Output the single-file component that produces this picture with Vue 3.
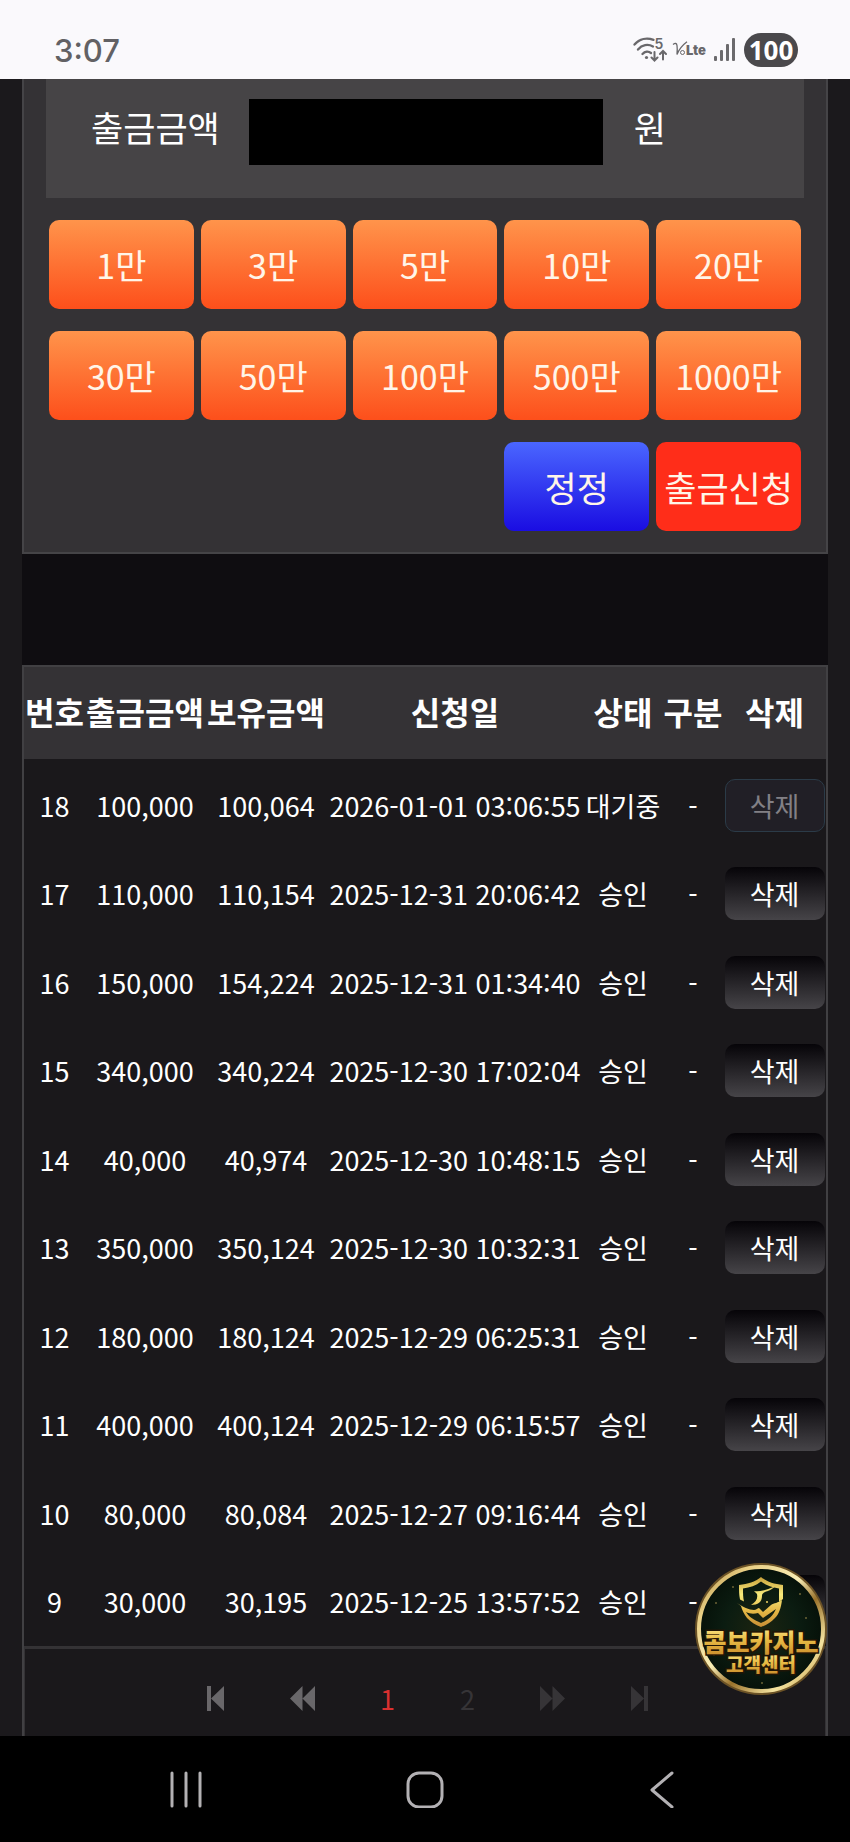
<script setup>
import { ref } from 'vue'

const amount = ref('')
const presets = [1, 3, 5, 10, 20, 30, 50, 100, 500, 1000]
const headings = ['번호', '출금금액', '보유금액', '신청일', '상태', '구분', '삭제']
const rows = [
  { no: 18, amount: '100,000', balance: '100,064', date: '2026-01-01 03:06:55', status: '대기중', pending: true },
  { no: 17, amount: '110,000', balance: '110,154', date: '2025-12-31 20:06:42', status: '승인' },
  { no: 16, amount: '150,000', balance: '154,224', date: '2025-12-31 01:34:40', status: '승인' },
  { no: 15, amount: '340,000', balance: '340,224', date: '2025-12-30 17:02:04', status: '승인' },
  { no: 14, amount: '40,000', balance: '40,974', date: '2025-12-30 10:48:15', status: '승인' },
  { no: 13, amount: '350,000', balance: '350,124', date: '2025-12-30 10:32:31', status: '승인' },
  { no: 12, amount: '180,000', balance: '180,124', date: '2025-12-29 06:25:31', status: '승인' },
  { no: 11, amount: '400,000', balance: '400,124', date: '2025-12-29 06:15:57', status: '승인' },
  { no: 10, amount: '80,000', balance: '80,084', date: '2025-12-27 09:16:44', status: '승인' },
  { no: 9, amount: '30,000', balance: '30,195', date: '2025-12-25 13:57:52', status: '승인' }
]
</script>

<template>
  <div class="screen" lang="ko">
    <header class="status-bar">
      <time class="clock">3:07</time>
      <div class="indicators">
        <svg class="wifi" viewBox="0 0 34 26" fill="none" stroke="#69686b" stroke-width="2.3" stroke-linecap="round">
          <path d="M1.500 7.500C6.500 1.500 14 .5 20.500 2.800M5 12.500c4-4.800 10-5.800 15-3M9.500 17c2.500-2.800 6-3 8.500-1" />
          <circle cx="13.500" cy="20.500" r="1.600" fill="#69686b" stroke="none" />
          <path d="M21.500 15v8M18.500 20.500l3 3 3-3M30 22.500v-8M27 17l3-3 3 3" stroke-width="2" />
          <text x="21.500" y="12" class="wifi-band">5</text>
        </svg>
        <svg class="volte" viewBox="0 0 34 18">
          <path d="M1 3.500q3.500-2.500 4 1t0 9Q8 6 15 .8" fill="none" stroke="#69686b" stroke-width="1.300" />
          <circle cx="10.500" cy="11.500" r="2" fill="none" stroke="#69686b" />
          <text x="14" y="14" class="volte-text">Lte</text>
        </svg>
        <svg class="signal" viewBox="0 0 22 24" fill="#6b6a6d">
          <rect x="0" y="18" width="3" height="5" rx="1" />
          <rect x="6" y="12" width="3" height="11" rx="1" />
          <rect x="12" y="6" width="3" height="17" rx="1" />
          <rect x="18" y="0" width="3" height="23" rx="1" />
        </svg>
        <span class="battery">100</span>
      </div>
    </header>

    <main class="page">
      <form class="withdraw" @submit.prevent>
        <div class="amount-row">
          <label for="amount">출금금액</label>
          <input id="amount" v-model="amount" type="text" inputmode="numeric" />
          <span>원</span>
        </div>
        <div class="presets">
          <button v-for="p in presets" :key="p" type="button" @click="amount = String(p * 10000)">{{ p }}만</button>
          <button type="reset" class="action reset" @click="amount = ''">정정</button>
          <button type="submit" class="action submit">출금신청</button>
        </div>
      </form>

      <section class="history">
        <table>
          <colgroup>
            <col class="c-no" /><col class="c-amount" /><col class="c-balance" /><col class="c-date" />
            <col class="c-status" /><col class="c-kind" /><col class="c-delete" />
          </colgroup>
          <thead>
            <tr><th v-for="h in headings" :key="h" scope="col">{{ h }}</th></tr>
          </thead>
          <tbody>
            <tr v-for="r in rows" :key="r.no">
              <td>{{ r.no }}</td>
              <td>{{ r.amount }}</td>
              <td>{{ r.balance }}</td>
              <td>{{ r.date }}</td>
              <td>{{ r.status }}</td>
              <td>-</td>
              <td><button type="button" class="delete" :disabled="r.pending">삭제</button></td>
            </tr>
          </tbody>
        </table>
        <nav class="pager" aria-label="페이지">
          <a href="#first" aria-label="첫 페이지"><svg class="edge" viewBox="0 0 19 25"><path d="M1 0h4v25H1zM18 0v25L5 12.500z" /></svg></a>
          <a href="#prev" aria-label="이전 페이지"><svg viewBox="0 0 25 25"><path d="M12.500 0v25L0 12.500zM25 0v25L12.500 12.500z" /></svg></a>
          <a href="#1" class="current" aria-current="page">1</a>
          <a href="#2" class="dim">2</a>
          <a href="#next" class="dim" aria-label="다음 페이지"><svg viewBox="0 0 25 25"><path d="M0 0v25l12.500-12.500zM12.500 0v25L25 12.500z" /></svg></a>
          <a href="#last" class="dim" aria-label="마지막 페이지"><svg class="edge" viewBox="0 0 19 25"><path d="M14 0h4v25h-4zM1 0v25l13-12.500z" /></svg></a>
        </nav>
      </section>

      <a href="#support" class="support" aria-label="콤보카지노 고객센터">
        <svg viewBox="0 0 132 132">
          <defs>
            <linearGradient id="gold" x1="0" y1="0" x2="0" y2="1">
              <stop offset="0" stop-color="#fff3a0" />
              <stop offset=".45" stop-color="#e9bd45" />
              <stop offset="1" stop-color="#c58428" />
            </linearGradient>
            <linearGradient id="shield" gradientUnits="userSpaceOnUse" x1="66" y1="14" x2="66" y2="64">
              <stop offset="0" stop-color="#c9a13a" />
              <stop offset=".35" stop-color="#f7ea7c" />
              <stop offset=".7" stop-color="#e3b544" />
              <stop offset="1" stop-color="#c88d35" />
            </linearGradient>
            <linearGradient id="rim" x1="0" y1="0" x2="1" y2="1">
              <stop offset="0" stop-color="#a8853a" />
              <stop offset=".2" stop-color="#e9cf85" />
              <stop offset=".45" stop-color="#f8edb5" />
              <stop offset=".6" stop-color="#9a722b" />
              <stop offset=".8" stop-color="#f4e3a0" />
              <stop offset="1" stop-color="#b4872c" />
            </linearGradient>
            <radialGradient id="felt">
              <stop offset="0" stop-color="#1c2410" />
              <stop offset=".6" stop-color="#0b1c11" />
              <stop offset="1" stop-color="#061109" />
            </radialGradient>
          </defs>
          <circle cx="66" cy="66" r="66" fill="#6b5226" />
          <circle cx="66" cy="66" r="62" fill="url(#felt)" stroke="url(#rim)" stroke-width="4" />
          <g fill="#6b6336">
            <circle cx="21" cy="40" r="1" /><circle cx="38" cy="24" r="1" /><circle cx="105" cy="31" r="1" />
            <circle cx="111" cy="55" r="1" /><circle cx="67" cy="120" r="1" /><circle cx="19" cy="92" r="1" />
          </g>
          <g fill="url(#shield)">
            <path d="M66 14c6 5 13 7 22 8v14l-4 3v-13.500c-7-1-13-3-18-7-5 4-11 6-18 7 0 5 0 9 1 13l-4-2c-1-5-1-9-1-14.500 9-1 16-3 22-8z" />
            <path d="M42 40c6 4 12 7 17 7 2 0 4-2 5-2l4 4 8-7c3-2 7-2 11-5-1 8-3 14-7 18-4 4-8 7-14 9-6-2-10-5-14-9-3-4-5-8-6-12zM51 49c3 5 8 8 15 11 7-3 12-7 15-14l-13 9-5-5c-4 1-8 1-12-1z" fill-rule="evenodd" />
            <path d="M59 28c6 1 12-1 22-5-5 4-8 5-11 6-2 1-3 2-3 4 0 6-4 9-11 9 5-3 7-6 6-11z" />
            <circle cx="72" cy="39" r="1" />
          </g>
          <text x="66" y="89" class="brand">콤보카지노</text>
          <text x="66" y="109" class="desk">고객센터</text>
        </svg>
      </a>
    </main>

    <nav class="system-nav" aria-label="시스템">
      <button type="button" aria-label="최근 앱"><svg viewBox="0 0 38 38"><path d="M5 3v33M19 3v33M33 3v33" /></svg></button>
      <button type="button" aria-label="홈"><svg viewBox="0 0 38 38"><rect x="2" y="3" width="34" height="34" rx="11" /></svg></button>
      <button type="button" aria-label="뒤로"><svg viewBox="0 0 38 38"><path d="M28 3L8 20l20 17" /></svg></button>
    </nav>
  </div>
</template>

<style>
body {
  background: #1b191c;
}
</style>

<style scoped>
.screen {
  display: flex;
  flex-direction: column;
  min-height: 100vh;
  color: #fff;
  font-family: "Noto Sans CJK KR", "Noto Sans", sans-serif;
}
.screen * {
  box-sizing: border-box;
}
button,
input {
  font: inherit;
  color: inherit;
  border: 0;
  padding: 0;
}
button {
  cursor: pointer;
}
.status-bar {
  display: flex;
  align-items: flex-end;
  justify-content: space-between;
  height: 79px;
  padding: 0 52px 11px 54px;
  background: #faf9fc;
  color: #626164;
}
.clock {
  font: 500 31px/34px Inter, sans-serif;
}
.indicators {
  display: flex;
  align-items: center;
  height: 36px;
}
.wifi {
  width: 34px;
  height: 26px;
  margin-right: 5px;
}
.wifi-band {
  font: 600 14px Inter, sans-serif;
  fill: #69686b;
  stroke: none;
}
.volte {
  width: 34px;
  height: 18px;
  margin-right: 8px;
}
.volte-text {
  font: 900 13px Inter, sans-serif;
  fill: #69686b;
}
.signal {
  width: 22px;
  height: 24px;
  margin-right: 8px;
}
.battery {
  width: 54px;
  border-radius: 17px;
  background: #4a494c;
  color: #fff;
  font: 700 26px/34px "Open Sans", sans-serif;
  text-align: center;
}
.page {
  position: relative;
  flex: 1;
  display: flex;
  flex-direction: column;
  margin: 0 22px;
  background: #0f0d11;
}
.withdraw {
  padding: 0 22px 21px;
  border: solid #454447;
  border-width: 0 2px 2px;
  background: #343235;
}
.amount-row {
  display: flex;
  align-items: flex-start;
  height: 119px;
  padding: 20px 44px 0 45px;
  background: #464446;
  font-size: 35px;
  line-height: 56px;
}
.amount-row input {
  flex: 0 1 354px;
  min-width: 0;
  height: 66px;
  margin: 0 31px 0 29px;
  background: #000;
}
.presets {
  display: grid;
  grid-template-columns: repeat(5, 1fr);
  gap: 22px 7px;
  padding: 22px 3px 0;
}
.presets button {
  height: 89px;
  border-radius: 10px;
  background: linear-gradient(#ff944b, #fd4f1b);
  color: #fff5e8;
  font-size: 34px;
  white-space: nowrap;
}
.presets .action {
  font-size: 35px;
}
.presets .reset {
  grid-column: 4;
  background: linear-gradient(#4a66ff, #1a0de2);
}
.presets .submit {
  background: #ff2d19;
}
.history {
  flex: 1;
  display: flex;
  flex-direction: column;
  margin-top: 111px;
  border: solid #414043;
  border-width: 2px 2px 0;
  background: #1a181b;
}
table {
  width: 100%;
  margin-bottom: 2px;
  table-layout: fixed;
  border-collapse: collapse;
}
.c-no { width: 61px; }
.c-amount { width: 120px; }
.c-balance { width: 122px; }
.c-date { width: 256px; }
.c-status { width: 80px; }
.c-kind { width: 60px; }
.c-delete { width: 103px; }
th,
td {
  text-align: center;
  white-space: nowrap;
}
th {
  height: 92px;
  padding: 0 0 4px;
  background: #343235;
  font-size: 32px;
  font-weight: 700;
}
td {
  height: 88px;
  padding: 4px 0 0;
  font-size: 27px;
}
tr:nth-child(even) td {
  height: 89px;
}
.delete {
  display: block;
  width: 100px;
  height: 53px;
  margin: 0 auto;
  border-radius: 10px;
  background: linear-gradient(#060408, #464448);
}
.delete:disabled {
  border: 1px solid #2b3b48;
  background: #211f26;
  color: #828085;
}
.pager {
  flex: 1;
  display: flex;
  align-items: center;
  justify-content: center;
  gap: 65px;
  min-height: 90px;
  padding: 12px 0 0 5px;
  border: solid #343235;
  border-width: 3px 1px 0;
  font-size: 27px;
}
.pager a {
  color: #69676a;
  text-decoration: none;
}
.pager svg {
  display: block;
  width: 25px;
  height: 25px;
  fill: currentColor;
}
.pager .edge {
  width: 19px;
}
.pager .current {
  color: #d93030;
}
.pager .dim {
  color: #363437;
}
.support {
  position: absolute;
  right: 1px;
  bottom: 41px;
  width: 132px;
  height: 132px;
}
.support svg {
  display: block;
}
.brand,
.desk {
  font-family: "Noto Sans CJK KR", sans-serif;
  font-weight: 900;
  text-anchor: middle;
  fill: url(#gold);
  stroke: #201505;
  stroke-width: 3px;
  paint-order: stroke;
}
.brand {
  font-size: 25px;
}
.desk {
  font-size: 19px;
}
.system-nav {
  display: flex;
  align-items: center;
  justify-content: space-between;
  height: 106px;
  padding: 0 168px 0 167px;
  background: #000;
}
.system-nav button {
  height: 38px;
  background: none;
}
.system-nav svg {
  display: block;
  width: 38px;
  height: 38px;
  fill: none;
  stroke: #b3b1b4;
  stroke-width: 3;
  stroke-linecap: round;
  stroke-linejoin: round;
}
</style>
